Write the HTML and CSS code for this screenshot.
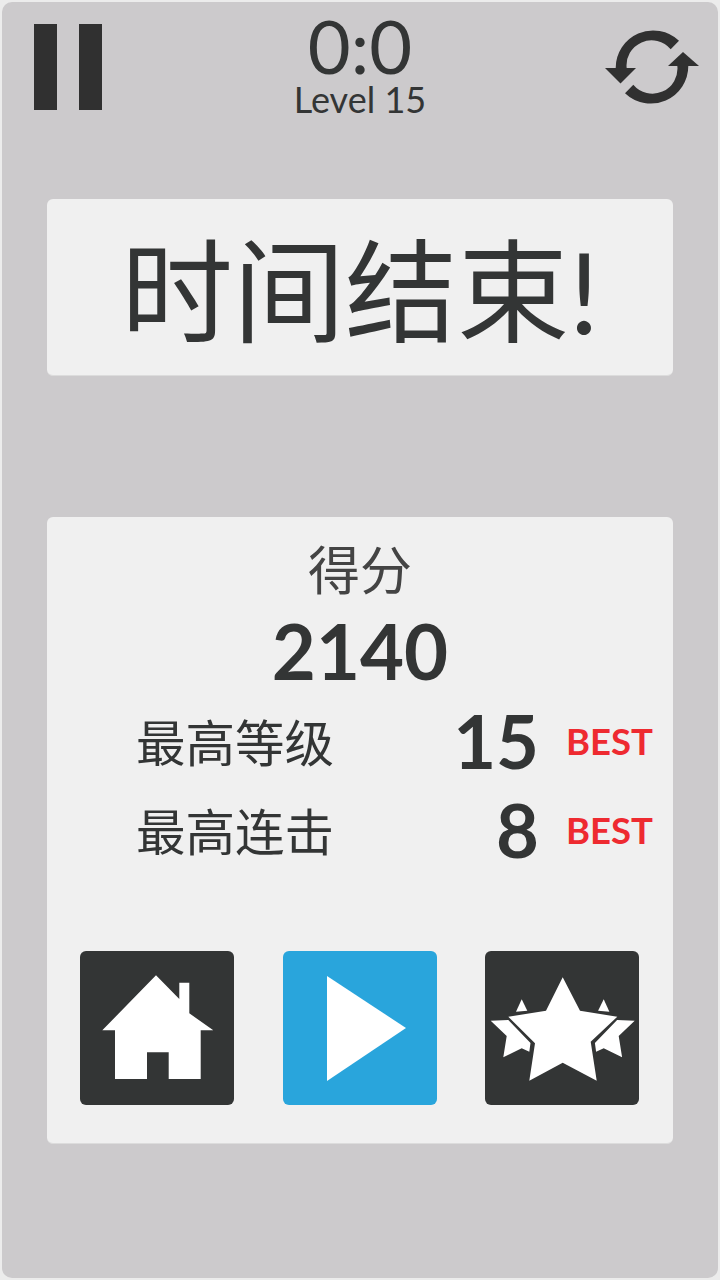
FILE: index.html
```html
<!DOCTYPE html>
<html lang="zh">
<head>
<meta charset="utf-8">
<title>时间结束</title>
<link rel="stylesheet" href="styles.css">
</head>
<body>
<main class="screen">
  <header class="topbar">
    <button class="pause" aria-label="Pause"><span class="pause-bar"></span><span class="pause-bar"></span></button>
    <div class="status">
      <div class="clock">0:0</div>
      <div class="level">Level 15</div>
    </div>
    <button class="refresh" aria-label="Restart">
      <svg class="refresh-icon" viewBox="0 0 96 80">
        <path d="M75 12.700 A37.500 37.500 0 0 0 11.700 40.300 L22.700 40.300 A25 25 0 0 1 66.700 21.300 Z"/>
        <path d="M21 65.300 A37.500 37.500 0 0 0 84.300 37.700 L73.300 37.700 A25 25 0 0 1 29.300 56.700 Z"/>
        <path d="M1 40 H32 L16.500 55.500 Z"/>
        <path d="M64 38 H95 L79 24 Z"/>
      </svg>
    </button>
  </header>

  <section class="panel banner">
    <h1 class="banner-text">时间结束!</h1>
  </section>

  <section class="panel results">
    <div class="score-label">得分</div>
    <div class="score-value">2140</div>
    <div class="stat stat-first">
      <span class="stat-label">最高等级</span>
      <span class="stat-value">15</span>
      <span class="stat-best">BEST</span>
    </div>
    <div class="stat">
      <span class="stat-label">最高连击</span>
      <span class="stat-value">8</span>
      <span class="stat-best">BEST</span>
    </div>
    <div class="actions">
      <button class="action" aria-label="Home">
        <svg class="action-icon" viewBox="0 0 154 154">
          <path d="M76 24.300 L99.300 48 V31.700 H109.300 V62.300 L133.300 79.300 H120.700 V128 H88.700 V101.300 H67 V128 H35 V79.300 H22.300 Z"/>
        </svg>
      </button>
      <button class="action action-play" aria-label="Play">
        <svg class="action-icon" viewBox="0 0 154 154">
          <path d="M44 25 L123 77 L44 130 Z"/>
        </svg>
      </button>
      <button class="action" aria-label="Ranking">
        <svg class="action-icon" viewBox="0 0 154 154">
          <path d="M77.700 26.300 L95 59.700 L132.300 65.700 L105.700 90.700 L111.700 129.700 L77.700 111.700 L44.300 129.700 L50 92.300 L23.300 65.700 L61 59.700 Z"/>
          <path d="M5.700 69.700 L23.300 69 L45.500 92 L44.300 100.700 L36.700 97.300 L18.300 106.300 L21.700 85 Z"/>
          <path d="M149.700 69.700 L132.100 69 L109.900 92 L111.100 100.700 L118.700 97.300 L137.100 106.300 L133.700 85 Z"/>
          <path d="M36.700 48.300 L42.300 59.700 L31 60.700 Z"/>
          <path d="M118.700 48.300 L124.400 60.700 L113.100 59.700 Z"/>
        </svg>
      </button>
    </div>
  </section>
</main>
</body>
</html>
```
FILE: styles.css
```css
* { box-sizing: border-box; }

html, body { margin: 0; height: 100%; }

body {
  width: 720px;
  height: 1280px;
  padding: 2px;
  background: #ececec;
  color: #333535;
  font-family: Lato, "Noto Sans CJK SC", sans-serif;
  overflow: hidden;
}

button {
  border: 0;
  padding: 0;
  background: none;
  display: block;
}

.screen {
  height: 1276px;
  border-radius: 10px;
  background: #cccacc;
  padding: 0 45px;
  display: flex;
  flex-direction: column;
}

/* top bar: pause, clock, restart */
.topbar {
  height: 197px;
  margin: 0 -45px;
  padding: 22px 18px 0 32px;
  display: flex;
  justify-content: space-between;
  align-items: flex-start;
}

.pause { display: flex; gap: 22px; }
.pause-bar { width: 23px; height: 86px; background: #303030; }

.status {
  flex: 1;
  text-align: center;
  margin-top: -10px;
  padding-left: 14px;
}

.clock {
  font-size: 74px;
  font-weight: 400;
  line-height: 64px;
  height: 64px;
}

.level {
  font-size: 36px;
  font-weight: 400;
  line-height: 36px;
  margin-top: 3px;
}

.refresh { margin-top: 4px; }
.refresh-icon { display: block; width: 96px; height: 80px; fill: #303030; }

/* light cards */
.panel {
  background: #f0f0f0;
  border-radius: 6px;
  border-bottom: 1px solid #dcdcdc;
  width: 626px;
}

.banner {
  height: 177px;
  padding-top: 8px;
  display: flex;
  align-items: center;
  justify-content: center;
}

.banner-text {
  margin: 0;
  font-size: 112px;
  font-weight: 400;
  line-height: 1;
}

.results {
  margin-top: 141px;
  height: 627px;
  padding-top: 22px;
}

.score-label {
  text-align: center;
  font-size: 52px;
  line-height: 62px;
  color: #444;
}

.score-value {
  margin-top: 8px;
  text-align: center;
  font-size: 76px;
  font-weight: 700;
  line-height: 84px;
}

.stat {
  display: grid;
  grid-template-columns: 283px 92px auto;
  column-gap: 28px;
  align-items: center;
  height: 89px;
  padding-left: 89px;
}

.stat-first { margin-top: 3px; }

.stat-label { font-size: 49.500px; }
.stat-value { font-size: 74px; font-weight: 700; text-align: right; line-height: 1; }
.stat-best { font-size: 36.500px; font-weight: 700; color: #ee2a30; margin-left: -1px; }

.actions {
  margin-top: 77px;
  padding: 0 34px 0 33px;
  display: flex;
  justify-content: space-between;
}

.action {
  width: 154px;
  height: 154px;
  border-radius: 6px;
  background: #333535;
}

.action-play { background: #29a5dc; }
.action-icon { display: block; width: 154px; height: 154px; fill: #fff; }
```
